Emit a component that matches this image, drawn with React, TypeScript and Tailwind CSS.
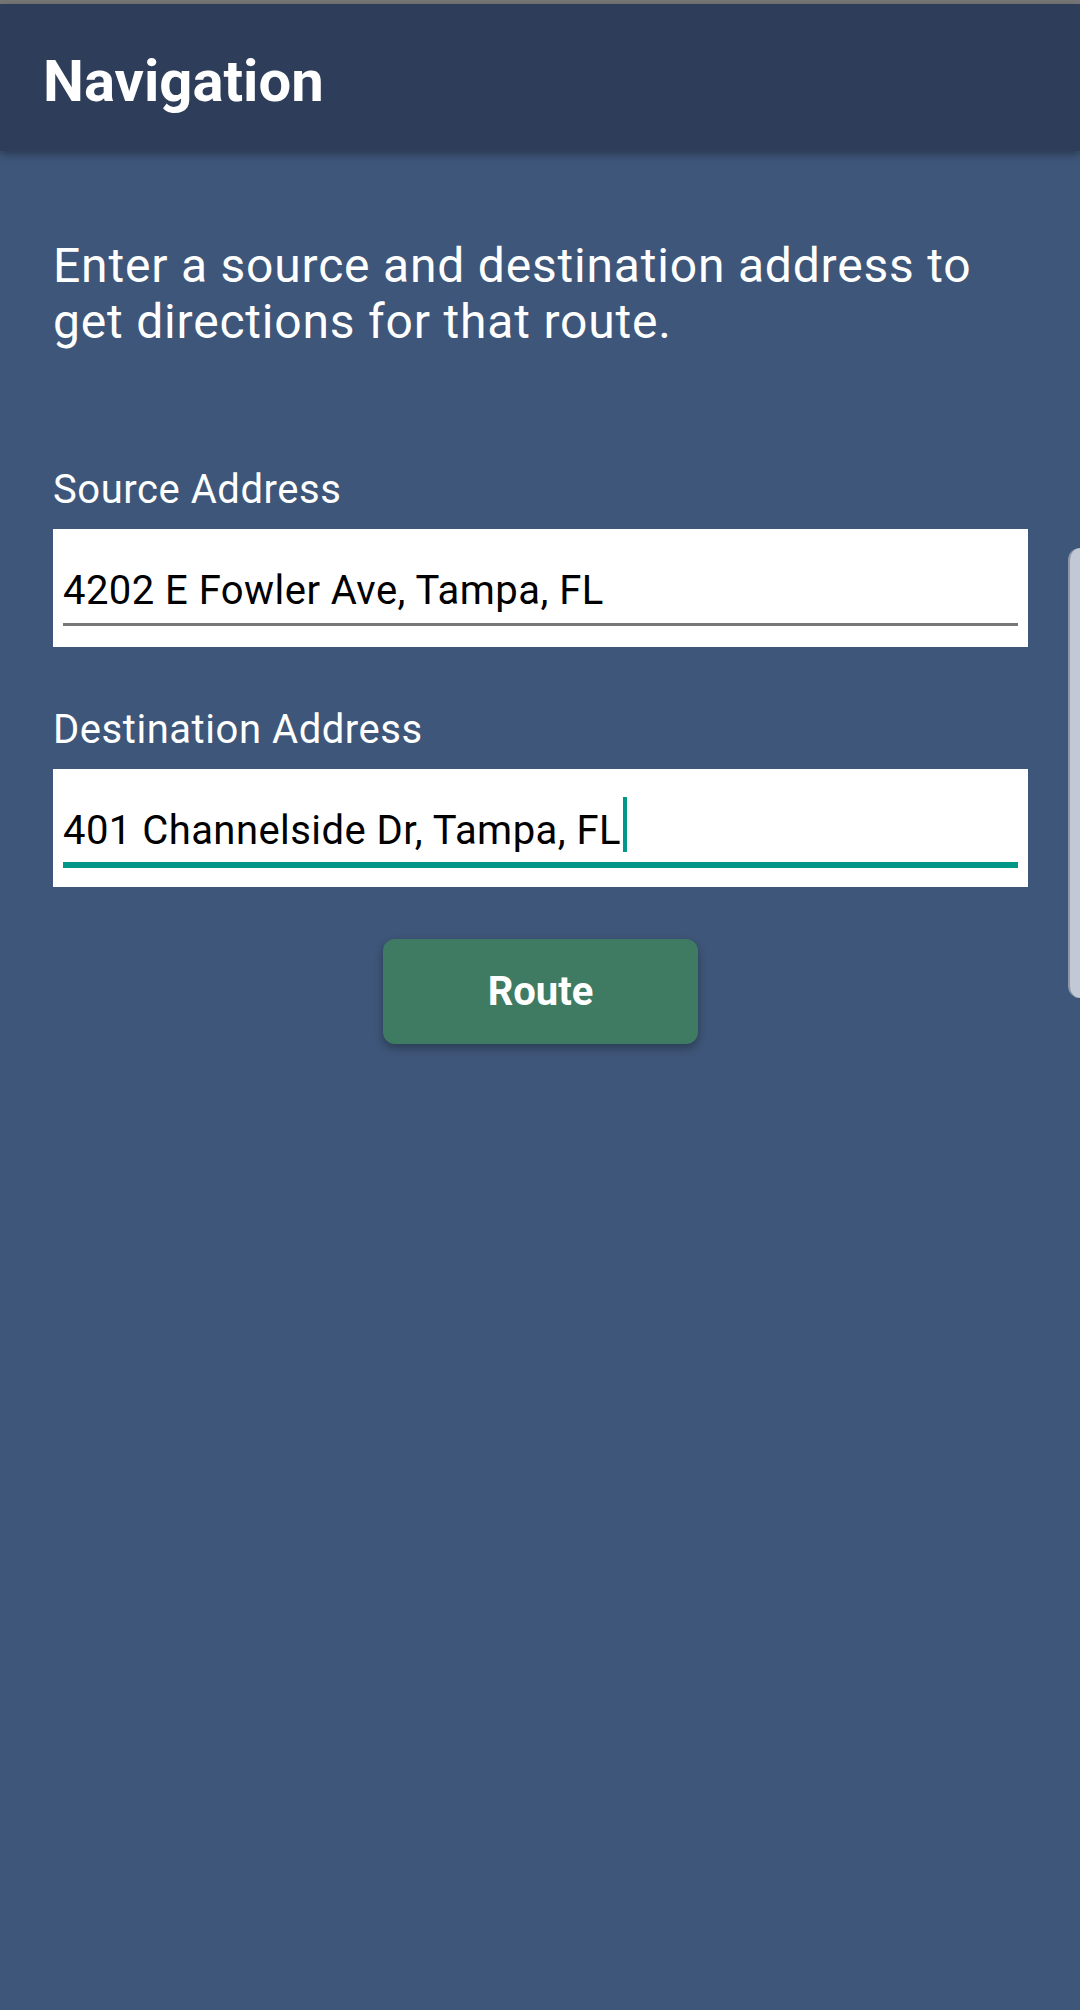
export default function App() {
  return (
    <div className="relative min-h-[2010px] bg-[#3e5679] font-['Roboto',sans-serif] overflow-hidden">
      {/* status strip */}
      <div className="h-[4px] bg-[#777777]" />

      {/* app bar */}
      <header className="relative z-10 h-[147px] bg-[#2e3e5a] pl-[43px] pt-[48px] shadow-[0_3px_8px_rgba(0,0,0,0.35)]">
        <h1 className="text-[58px] leading-[58px] font-bold text-white">Navigation</h1>
      </header>

      <main className="px-[53px] pr-[52px]">
        <p className="mt-[87px] text-[48px] leading-[56px] tracking-[0.8px] text-white">
          Enter a source and destination address to get directions for that route.
        </p>

        <label className="mt-[116px] block text-[40px] leading-[48px] tracking-[0.55px] text-white">
          Source Address
        </label>
        <div className="mt-[15px] h-[118px] bg-white px-[10px] pt-[38px]">
          <div className="border-b-[3px] border-[#777777] pb-[8px] text-[40px] leading-[48px] tracking-[0.45px] text-black">
            4202 E Fowler Ave, Tampa, FL
          </div>
        </div>

        <label className="mt-[59px] block text-[40px] leading-[48px] tracking-[0.55px] text-white">
          Destination Address
        </label>
        <div className="mt-[15px] h-[118px] bg-white px-[10px] pt-[38px]">
          <div className="border-b-[6px] border-[#009688] pb-[7px] text-[40px] leading-[48px] tracking-[0.45px] text-black">
            401 Channelside Dr, Tampa, FL
            <span className="ml-[2px] -mt-[20px] inline-block h-[55px] w-[4px] bg-[#009688] align-[-8px]" />
          </div>
        </div>

        <div className="mt-[52px] flex justify-center">
          <button className="h-[105px] w-[315px] rounded-[12px] bg-[#3e7b62] text-[40px] font-bold text-white shadow-[0_4px_8px_rgba(0,0,0,0.3)]">
            Route
          </button>
        </div>
      </main>

      {/* overlay scroll indicator */}
      <div className="absolute right-0 top-[548px] h-[450px] w-[12px] rounded-l-[12px] border-l-2 border-[#8e97a6] bg-[#c3c9d4]" />
    </div>
  );
}
